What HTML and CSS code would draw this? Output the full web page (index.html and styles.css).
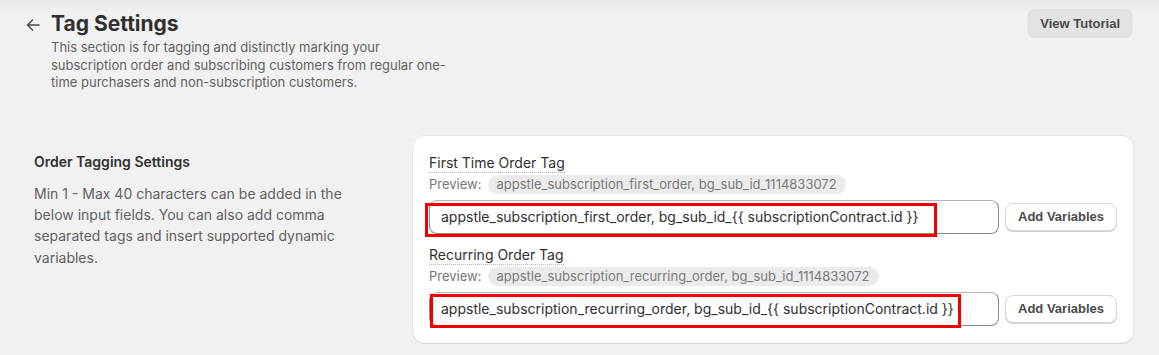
FILE: index.html
```html
<!DOCTYPE html>
<html lang="en">

<head>
    <meta charset="utf-8">
    <title>Tag Settings</title>
    <link rel="stylesheet" href="styles.css">
</head>

<body>
    <header class="sidehoved">
        <div class="titel">
            <svg class="tilbage" width="16" height="16" viewBox="0 0 16 16">
                <path d="M14 8H2.5M7.5 3L2.5 8l5 5" fill="none" stroke="#4a4a4a" stroke-width="1.5" stroke-linecap="round" stroke-linejoin="round" />
            </svg>
            <div>
                <h1>Tag Settings</h1>
                <p>This section is for tagging and distinctly marking your subscription order and subscribing customers from regular one-time purchasers and non-subscription customers.</p>
            </div>
        </div>
        <button class="tutorial">View Tutorial</button>
    </header>

    <section class="indstillinger">
        <div class="forklaring">
            <h2>Order Tagging Settings</h2>
            <p>Min 1 - Max 40 characters can be added in the below input fields. You can also add comma separated tags and insert supported dynamic variables.</p>
        </div>

        <div class="kort">
            <div class="felt">
                <label>First Time Order Tag</label>
                <div class="preview">Preview: <span>appstle_subscription_first_order, bg_sub_id_1114833072</span></div>
                <div class="raekke">
                    <div class="input">
                        appstle_subscription_first_order, bg_sub_id_{{ subscriptionContract.id }}
                        <span class="markering en"></span>
                    </div>
                    <button>Add Variables</button>
                </div>
            </div>
            <div class="felt">
                <label>Recurring Order Tag</label>
                <div class="preview">Preview: <span>appstle_subscription_recurring_order, bg_sub_id_1114833072</span></div>
                <div class="raekke">
                    <div class="input">
                        appstle_subscription_recurring_order, bg_sub_id_{{ subscriptionContract.id }}
                        <span class="markering to"></span>
                    </div>
                    <button>Add Variables</button>
                </div>
            </div>
        </div>
    </section>
</body>

</html>
```

FILE: styles.css
```css
body {
    margin: 0;
    font-family: 'Inter', sans-serif;
    color: #303030;
    background: linear-gradient(#e6e6e6, #f1f1f1 12px) #f1f1f1;
    height: 355px;
}

.sidehoved {
    display: flex;
    justify-content: space-between;
    padding: 11px 26px 0 25px;
}

.titel {
    display: flex;
    gap: 10px;
}

.tilbage {
    margin-top: 6px;
}

h1 {
    font-size: 21px;
    font-weight: 700;
    line-height: 26px;
    margin: 0;
    color: #303030;
}

.titel p {
    font-size: 13px;
    line-height: 17.5px;
    color: #616161;
    width: 400px;
    margin: 2px 0 0 0;
}

.tutorial {
    background: #e3e3e3;
    border: none;
    border-radius: 8px;
    height: 29px;
    margin-top: -2px;
    padding: 0 13px;
    font-family: 'Liberation Sans', sans-serif;
    font-weight: 700;
    font-size: 13px;
    color: #4a4a4a;
}

.indstillinger {
    display: flex;
    padding: 44px 26px 0 34px;
}

.forklaring {
    flex: 1;
    padding-top: 16px;
}

h2 {
    font-size: 14px;
    font-weight: 600;
    line-height: 20px;
    margin: 0;
}

.forklaring p {
    font-size: 14px;
    line-height: 21.4px;
    color: #616161;
    width: 320px;
    margin: 11px 0 0 0;
}

.kort {
    width: 720px;
    box-sizing: border-box;
    background: white;
    border-radius: 12px;
    box-shadow: 0 1px 0 #d4d4d4, 0 0 0 1px #e6e6e6;
    padding: 16px 16px 17px 16px;
    display: flex;
    flex-direction: column;
    gap: 10px;
}

label {
    display: inline-block;
    font-size: 14px;
    color: #303030;
    border-bottom: 1px dotted #b5b5b5;
    line-height: 19px;
}

.preview {
    display: flex;
    align-items: center;
    gap: 6px;
    font-size: 13px;
    color: #757575;
    margin: 2px 0 6px 0;
}

.preview span {
    background: #ebebeb;
    border-radius: 10px;
    padding: 0 9px;
    line-height: 19px;
    color: #7a7a7a;
}

.raekke {
    display: flex;
    gap: 6px;
    align-items: center;
}

.input {
    position: relative;
    flex: 1;
    height: 34px;
    box-sizing: border-box;
    border: 1px solid #8a8a8a;
    border-top-color: #b5b5b5;
    border-radius: 8px;
    font-size: 14px;
    line-height: 32px;
    padding-left: 11px;
    color: #303030;
    white-space: nowrap;
}

.raekke button {
    height: 28px;
    padding: 0 12px;
    background: white;
    border: 1px solid #d8d8d8;
    border-radius: 8px;
    box-shadow: 0 1px 0 #d0d0d0;
    font-family: 'Liberation Sans', sans-serif;
    font-weight: 700;
    font-size: 13px;
    color: #4a4a4a;
}

.markering {
    position: absolute;
    border: 3px solid #f00000;
    box-sizing: border-box;
}

.en {
    left: -5px;
    top: 2px;
    width: 512px;
    height: 34px;
}

.to {
    left: 0;
    top: 1px;
    width: 531px;
    height: 34px;
}
```
